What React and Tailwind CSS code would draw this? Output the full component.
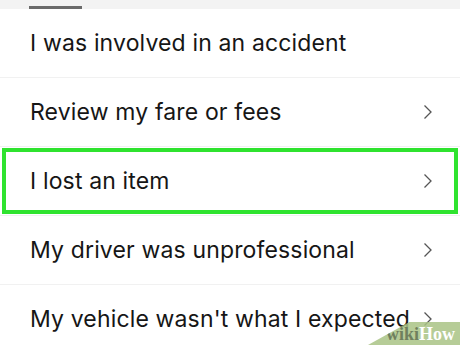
const items = [
  { label: "I was involved in an accident", chevron: false },
  { label: "Review my fare or fees", chevron: true },
  { label: "I lost an item", chevron: true, highlight: true },
  { label: "My driver was unprofessional", chevron: true },
  { label: "My vehicle wasn't what I expected", chevron: true },
];

function Chevron() {
  return (
    <svg width="10" height="16" viewBox="0 0 10 16" className="ml-1 shrink-0" fill="none">
      <polyline points="1.5,1.5 8,8 1.5,14.5" stroke="#555" strokeWidth="1.3" />
    </svg>
  );
}

export default function App() {
  return (
    <div className="relative h-[345px] w-[460px] overflow-hidden bg-white font-['Inter',sans-serif] text-[#161616]">
      {/* tab strip */}
      <div className="h-[9px] bg-[#f3f3f3] pl-[29px] pt-[6px]">
        <div className="h-[3px] w-[53px] bg-[#6b6b6b]" />
      </div>

      <div className="flex flex-col">
        {items.map((it, i) => (
          <div
            key={i}
            className="relative flex h-[69px] items-center border-b border-[#f1f1f1] pl-[30px] pr-[27px]"
          >
            <span className="flex-1 whitespace-nowrap text-[23px] leading-none tracking-[0.15px]">
              {it.label}
            </span>
            {it.chevron && <Chevron />}
            {it.highlight && (
              <div className="pointer-events-none absolute inset-x-[2px] inset-y-[1px] border-[4px] border-[#2fe32f]" />
            )}
          </div>
        ))}
      </div>

      {/* watermark */}
      <div className="absolute bottom-0 right-0 flex h-[23px] w-[92px] items-center justify-end bg-[#a9c385]/85 pr-[5px] [clip-path:polygon(45%_0,100%_0,100%_100%,0_100%)]">
        <span className="font-['Liberation_Serif',serif] text-[18px] font-bold leading-none">
          <span className="text-[#6f7f5e]">wiki</span>
          <span className="text-white">How</span>
        </span>
      </div>
    </div>
  );
}
